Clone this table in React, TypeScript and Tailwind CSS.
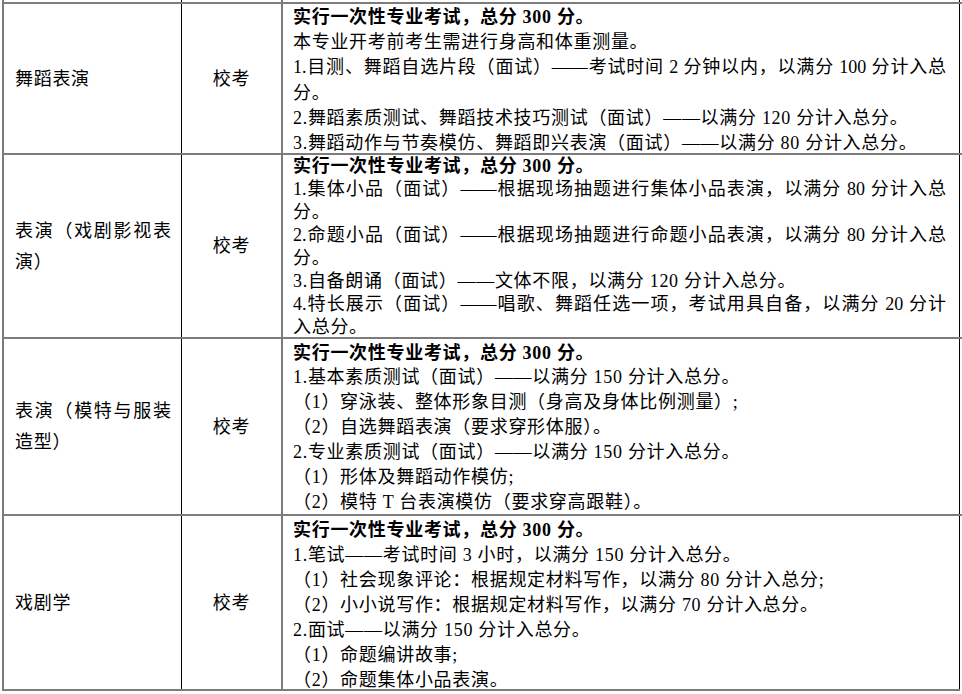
type Line = { text: string; bold?: boolean; justify?: boolean };

interface ExamRow {
  /** Major name, one entry per visual line */
  major: string[];
  /** Exam mode */
  mode: string;
  /** Exam content lines */
  lines: Line[];
  /** Row height (px, including top border) */
  heightClass: string;
  /** Line height and top padding of the content cell */
  contentClass: string;
}

const HEAD = '实行一次性专业考试，总分 300 分。';

const rows: ExamRow[] = [
  {
    major: ['舞蹈表演'],
    mode: '校考',
    heightClass: 'h-[151px]',
    contentClass: 'leading-[25.2px] pt-[1px]',
    lines: [
      { text: HEAD, bold: true },
      { text: '本专业开考前考生需进行身高和体重测量。' },
      { text: '1.目测、舞蹈自选片段（面试）——考试时间 2 分钟以内，以满分 100 分计入总', justify: true },
      { text: '分。' },
      { text: '2.舞蹈素质测试、舞蹈技术技巧测试（面试）——以满分 120 分计入总分。' },
      { text: '3.舞蹈动作与节奏模仿、舞蹈即兴表演（面试）——以满分 80 分计入总分。' },
    ],
  },
  {
    major: ['表演（戏剧影视表', '演）'],
    mode: '校考',
    heightClass: 'h-[184px]',
    contentClass: 'leading-[23px] pt-0',
    lines: [
      { text: HEAD, bold: true },
      { text: '1.集体小品（面试）——根据现场抽题进行集体小品表演，以满分 80 分计入总', justify: true },
      { text: '分。' },
      { text: '2.命题小品（面试）——根据现场抽题进行命题小品表演，以满分 80 分计入总', justify: true },
      { text: '分。' },
      { text: '3.自备朗诵（面试）——文体不限，以满分 120 分计入总分。' },
      { text: '4.特长展示（面试）——唱歌、舞蹈任选一项，考试用具自备，以满分 20 分计', justify: true },
      { text: '入总分。' },
    ],
  },
  {
    major: ['表演（模特与服装', '造型）'],
    mode: '校考',
    heightClass: 'h-[177px]',
    contentClass: 'leading-[24.9px] pt-[1.5px]',
    lines: [
      { text: HEAD, bold: true },
      { text: '1.基本素质测试（面试）——以满分 150 分计入总分。' },
      { text: '（1）穿泳装、整体形象目测（身高及身体比例测量）;' },
      { text: '（2）自选舞蹈表演（要求穿形体服）。' },
      { text: '2.专业素质测试（面试）——以满分 150 分计入总分。' },
      { text: '（1）形体及舞蹈动作模仿;' },
      { text: '（2）模特 T 台表演模仿（要求穿高跟鞋）。' },
    ],
  },
  {
    major: ['戏剧学'],
    mode: '校考',
    heightClass: 'h-[175px]',
    contentClass: 'leading-[25.1px] pt-[1.5px]',
    lines: [
      { text: HEAD, bold: true },
      { text: '1.笔试——考试时间 3 小时，以满分 150 分计入总分。' },
      { text: '（1）社会现象评论：根据规定材料写作，以满分 80 分计入总分;' },
      { text: '（2）小小说写作：根据规定材料写作，以满分 70 分计入总分。' },
      { text: '2.面试——以满分 150 分计入总分。' },
      { text: '（1）命题编讲故事;' },
      { text: '（2）命题集体小品表演。' },
    ],
  },
];

const cell1 = 'w-[180px] shrink-0 border-l-2 border-l-[#7c7c7c] border-r border-r-black';
const cell2 = 'w-[101px] shrink-0 border-r-2 border-r-[#7c7c7c]';
const cell3 = 'w-[677px] shrink-0 border-r border-r-black';

function TableRow({ row }: { row: ExamRow }) {
  return (
    <div className={`flex border-t-2 border-t-[#7c7c7c] ${row.heightClass}`}>
      {/* Major */}
      <div className={`${cell1} flex items-center pl-[11px] pr-[10px]`}>
        <div className="w-full leading-[31px] pt-[1px]">
          {row.major.map((m, i) => (
            <div
              key={i}
              className={
                i < row.major.length - 1
                  ? 'tracking-normal text-justify [text-align-last:justify]'
                  : ''
              }
            >
              {m}
            </div>
          ))}
        </div>
      </div>

      {/* Exam mode */}
      <div className={`${cell2} flex items-center justify-center`}>
        <span className="pt-[1px]">{row.mode}</span>
      </div>

      {/* Exam content */}
      <div className={`${cell3} overflow-hidden pl-[10px] pr-[13px] ${row.contentClass}`}>
        {row.lines.map((l, i) => (
          <div
            key={i}
            className={[
              l.bold ? 'font-bold' : '',
              l.justify ? 'tracking-normal text-justify [text-align-last:justify]' : '',
            ].join(' ')}
          >
            {l.text}
          </div>
        ))}
      </div>
    </div>
  );
}

export default function App() {
  return (
    <div className="w-[962px] h-[694px] overflow-hidden bg-white pl-[2px] text-black text-[18px] tracking-[0.7px] font-['Liberation_Serif','Noto_Sans_CJK_SC',serif]">
      {/* tail of the row above */}
      <div className="flex h-[2px]">
        <div className={cell1} />
        <div className={cell2} />
        <div className={cell3} />
      </div>

      {rows.map((row, i) => (
        <TableRow key={i} row={row} />
      ))}

      <div className="h-[2px] w-[958px] bg-[#7c7c7c]" />
    </div>
  );
}
